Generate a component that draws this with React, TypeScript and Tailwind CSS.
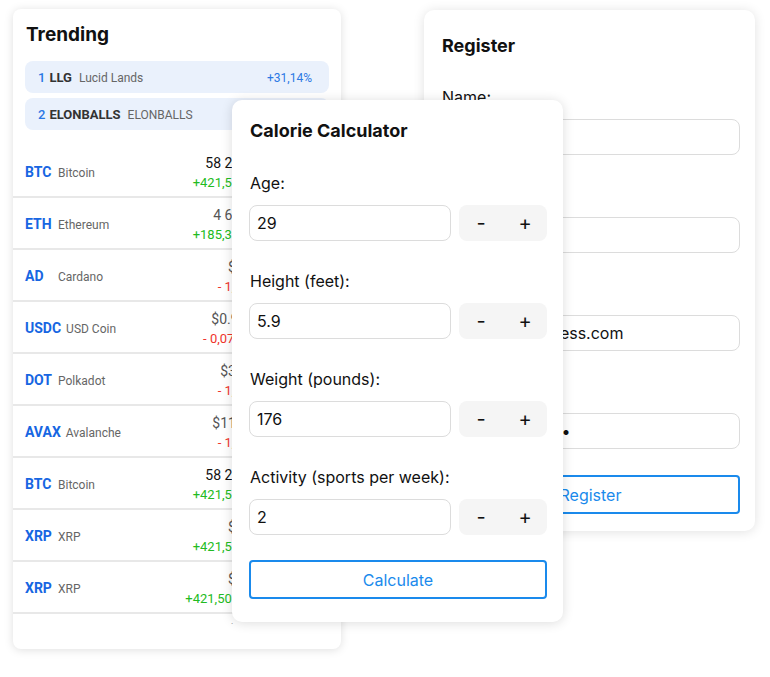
type Coin = {
  sym: string
  name: string
  price: string
  change: string
  up: boolean
  dark?: boolean
}

const trending = [
  { rank: 1, sym: 'LLG', name: 'Lucid Lands', change: '+31,14%' },
  { rank: 2, sym: 'ELONBALLS', name: 'ELONBALLS', change: '+12,87%' },
]

const coins: Coin[] = [
  { sym: 'BTC', name: 'Bitcoin', price: '58 263,21 $', change: '+421,56 (0,7%)', up: true, dark: true },
  { sym: 'ETH', name: 'Ethereum', price: '4 632,18 $', change: '+185,32 (4,1%)', up: true },
  { sym: 'AD', name: 'Cardano', price: '$1,2345', change: '- 1,23 (2%)', up: false },
  { sym: 'USDC', name: 'USD Coin', price: '$0.999871', change: '- 0,0712 (7%)', up: false },
  { sym: 'DOT', name: 'Polkadot', price: '$34,2109', change: '- 1,23 (2%)', up: false },
  { sym: 'AVAX', name: 'Avalanche', price: '$11,48291', change: '- 1,23 (2%)', up: false },
  { sym: 'BTC', name: 'Bitcoin', price: '58 263,21 $', change: '+421,56 (0,7%)', up: true, dark: true },
  { sym: 'XRP', name: 'XRP', price: '$1,2345', change: '+421,56 (0,7%)', up: true },
  { sym: 'XRP', name: 'XRP', price: '$1,2345', change: '+421,506 (0,7%)', up: true },
  { sym: 'XRP', name: 'XRP', price: '$1,2345', change: '+421,56 (0,7%)', up: true },
]

const calorieFields = [
  { label: 'Age:', value: '29' },
  { label: 'Height (feet):', value: '5.9' },
  { label: 'Weight (pounds):', value: '176' },
  { label: 'Activity (sports per week):', value: '2' },
]

function TrendingCard() {
  return (
    <div className="absolute left-[13px] top-[9px] flex h-[640px] w-[328px] flex-col overflow-hidden rounded-[8px] bg-white pt-[14px] font-['Roboto',sans-serif] shadow-[0_1px_10px_rgba(0,0,0,0.13)]">
      <h2 className="pl-[13px] font-['Inter',sans-serif] text-[19px] font-bold leading-6 text-[#111]">Trending</h2>

      <div className="mt-[14px] flex flex-col gap-[5px] px-3">
        {trending.map((t) => (
          <div key={t.rank} className="flex h-8 items-center rounded-[8px] bg-[#eaf1fc] pl-[13px] pr-[17px] pt-px">
            <span className="text-[13px] font-medium text-[#2a78e4]">{t.rank}</span>
            <span className="ml-[4px] text-[13px] font-bold text-[#333]">{t.sym}</span>
            <span className="ml-[7px] text-[12px] text-[#666]">{t.name}</span>
            <span className="ml-auto text-[12px] text-[#2a78e4]">{t.change}</span>
          </div>
        ))}
      </div>

      {/* scroll area, clipped just under the tenth row's first line */}
      <div className="mt-4 h-[478px] overflow-hidden">
        {coins.map((c, i) => (
          <div key={i} className="flex h-[52px] items-center border-b-2 border-[#e8e8e8] pl-3 pr-[63px] pt-[3px]">
            <div className="flex flex-1 items-baseline">
              <span className="min-w-[28px] text-[14px] font-bold text-[#1766e2]">{c.sym}</span>
              <span className="ml-[5px] text-[12px] text-[#666]">{c.name}</span>
            </div>
            <div className="text-right leading-5">
              <div className={c.dark ? 'text-[14px] text-[#111]' : 'text-[14px] text-[#555]'}>{c.price}</div>
              <div className={c.up ? 'text-[13px] text-[#22bb22]' : 'text-[13px] text-[#f0342c]'}>{c.change}</div>
            </div>
          </div>
        ))}
      </div>
    </div>
  )
}

function RegisterCard() {
  return (
    <div className="absolute left-[424px] top-[10px] h-[521px] w-[331px] rounded-[10px] bg-white pl-[17px] pr-[15px] pt-[24px] font-['Inter',sans-serif] text-[#111] shadow-[0_1px_12px_rgba(0,0,0,0.12)]">
      <h2 className="pl-px text-[18px] font-bold leading-6">Register</h2>

      <div className="mt-[27px]">
        <label className="block pl-px text-[16px] leading-6">Name:</label>
        <input className="mt-[10px] h-9 w-full rounded-[8px] border border-[#dcdcdc] px-[7px] text-[16px] outline-none" />
      </div>
      <div className="mt-7">
        <label className="block pl-px text-[16px] leading-6">Surname:</label>
        <input className="mt-[10px] h-9 w-full rounded-[8px] border border-[#dcdcdc] px-[7px] text-[16px] outline-none" />
      </div>
      <div className="mt-7">
        <label className="block pl-px text-[16px] leading-6">Email:</label>
        <input
          defaultValue="johndoe@address.com"
          className="mt-[10px] h-9 w-full rounded-[8px] border border-[#dcdcdc] px-[7px] text-[16px] outline-none"
        />
      </div>
      <div className="mt-7">
        <label className="block pl-px text-[16px] leading-6">Password:</label>
        <input
          type="password"
          defaultValue="secretpass123"
          className="mt-[10px] h-9 w-full rounded-[8px] border border-[#dcdcdc] px-[7px] text-[16px] tracking-[0.37px] outline-none"
        />
      </div>

      <button className="mt-[26px] h-[39px] w-full rounded-[4px] border-2 border-[#1a8aec] bg-white text-[16px] text-[#1a8aec]">
        Register
      </button>
    </div>
  )
}

function CalorieCard() {
  return (
    <div className="absolute left-[232px] top-[100px] w-[331px] rounded-[10px] bg-white pb-[23px] pl-[17px] pr-4 pt-[19px] font-['Inter',sans-serif] text-[#111] shadow-[0_1px_12px_rgba(0,0,0,0.14)]">
      <h2 className="pl-px text-[18px] font-bold leading-6">Calorie Calculator</h2>

      {calorieFields.map((f) => (
        <div key={f.label} className="mt-7">
          <label className="block pl-px text-[16px] leading-6">{f.label}</label>
          <div className="mt-[10px] flex gap-2">
            <input
              defaultValue={f.value}
              className="h-9 w-[202px] rounded-[8px] border border-[#dcdcdc] px-[7px] text-[16px] outline-none"
            />
            <div className="flex h-9 w-[88px] rounded-[8px] bg-[#f5f5f5]">
              <button className="flex-1 text-[20px] leading-none">-</button>
              <button className="flex-1 text-[20px] leading-none">+</button>
            </div>
          </div>
        </div>
      ))}

      <button className="mt-[25px] h-[39px] w-full rounded-[4px] border-2 border-[#1a8aec] bg-white text-[16px] text-[#1a8aec]">
        Calculate
      </button>
    </div>
  )
}

export default function App() {
  return (
    <div className="relative h-[677px] w-[770px] overflow-hidden bg-white">
      <TrendingCard />
      <RegisterCard />
      <CalorieCard />
    </div>
  )
}
